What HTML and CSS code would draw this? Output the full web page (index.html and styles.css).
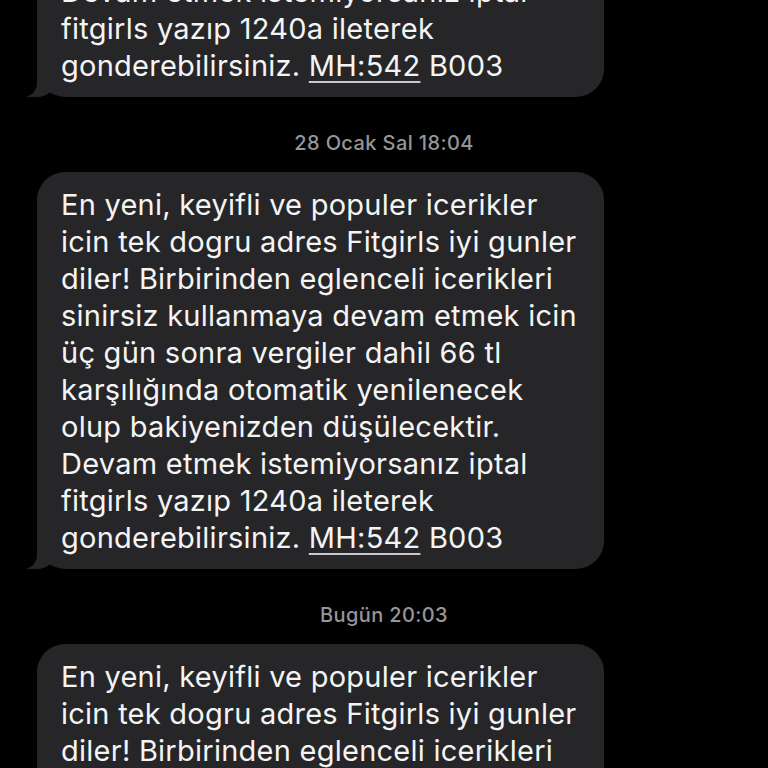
FILE: index.html
```html
<!DOCTYPE html>
<html lang="tr">
<head>
<meta charset="utf-8">
<title>Mesajlar</title>
<link rel="stylesheet" href="styles.css">
</head>
<body>
<main class="thread">
  <div class="row">
    <p class="bubble">En yeni, keyifli ve populer icerikler<br>icin tek dogru adres Fitgirls iyi gunler<br>diler! Birbirinden eglenceli icerikleri<br>sinirsiz kullanmaya devam etmek icin<br>üç gün sonra vergiler dahil 66 tl<br>karşılığında otomatik yenilenecek<br>olup bakiyenizden düşülecektir.<br>Devam etmek istemiyorsanız iptal<br>fitgirls yazıp 1240a ileterek<br>gonderebilirsiniz. <span class="link">MH:542</span> B003</p>
  </div>
  <div class="stamp">28 Ocak Sal 18:04</div>
  <div class="row">
    <p class="bubble">En yeni, keyifli ve populer icerikler<br>icin tek dogru adres Fitgirls iyi gunler<br>diler! Birbirinden eglenceli icerikleri<br>sinirsiz kullanmaya devam etmek icin<br>üç gün sonra vergiler dahil 66 tl<br>karşılığında otomatik yenilenecek<br>olup bakiyenizden düşülecektir.<br>Devam etmek istemiyorsanız iptal<br>fitgirls yazıp 1240a ileterek<br>gonderebilirsiniz. <span class="link">MH:542</span> B003</p>
  </div>
  <div class="stamp">Bugün 20:03</div>
  <div class="row">
    <p class="bubble">En yeni, keyifli ve populer icerikler<br>icin tek dogru adres Fitgirls iyi gunler<br>diler! Birbirinden eglenceli icerikleri<br>sinirsiz kullanmaya devam etmek icin<br>üç gün sonra vergiler dahil 66 tl<br>karşılığında otomatik yenilenecek<br>olup bakiyenizden düşülecektir.<br>Devam etmek istemiyorsanız iptal<br>fitgirls yazıp 1240a ileterek<br>gonderebilirsiniz. <span class="link">MH:542</span> B003</p>
  </div>
</main>
</body>
</html>
```

FILE: styles.css
```css
html, body {
  margin: 0;
  padding: 0;
  background: #000;
  height: 100%;
  overflow: hidden;
}

.thread {
  display: flex;
  flex-direction: column;
  margin-top: -300px;
  font-family: Inter, "Noto Sans", "DejaVu Sans", sans-serif;
}

.row {
  display: flex;
  padding-left: 37px;
}

.bubble {
  position: relative;
  margin: 0;
  width: 567px;
  box-sizing: border-box;
  padding: 14px 16px 13px 24px;
  background: #262628;
  color: #f4f4f5;
  font-size: 29px;
  letter-spacing: 0.25px;
  line-height: 37px;
  white-space: nowrap;
  border-radius: 28px;
}

.bubble::before {
  content: "";
  position: absolute;
  left: -10px;
  bottom: 0;
  width: 30px;
  height: 28px;
  background: #262628;
  border-bottom-right-radius: 20px;
}

.bubble::after {
  content: "";
  position: absolute;
  left: -30px;
  bottom: 0;
  width: 30px;
  height: 30px;
  background: #000;
  border-bottom-right-radius: 14px;
}

.link {
  text-decoration: underline;
  text-decoration-thickness: 1.5px;
  text-underline-offset: 5px;
  text-decoration-color: #c8c8cc;
}

.stamp {
  display: flex;
  justify-content: center;
  padding: 34px 0 17px;
  color: #95959a;
  font-size: 20px;
  letter-spacing: 0.4px;
  line-height: 24px;
  font-weight: 500;
}
```
